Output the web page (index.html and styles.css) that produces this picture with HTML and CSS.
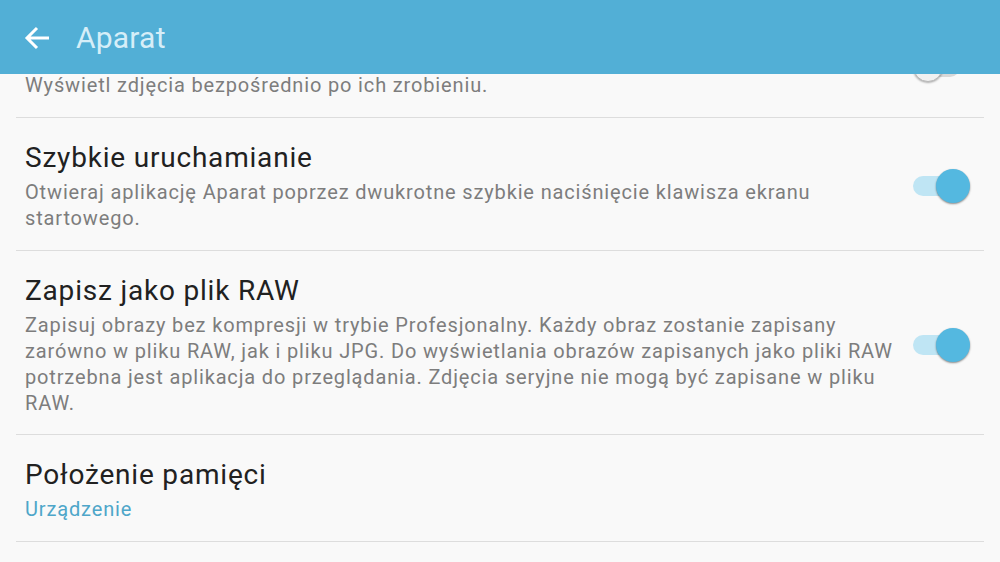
FILE: index.html
```html
<!DOCTYPE html>
<html lang="pl">
<head>
<meta charset="utf-8">
<link rel="stylesheet" href="styles.css">
</head>
<body>
<div class="app">
  <header class="appbar">
    <span class="back" aria-label="Wstecz">
      <svg width="28" height="28" viewBox="0 0 28 28"><path d="M26 14H4M14 4L4 14l10 10" fill="none" stroke="#ffffff" stroke-width="3" stroke-linecap="butt" stroke-linejoin="miter"/></svg>
    </span>
    <h1 class="title">Aparat</h1>
  </header>
  <main class="list">
    <div class="item first">
      <div class="text">
        <div class="item-sub">Wyświetl zdjęcia bezpośrednio po ich zrobieniu.</div>
      </div>
      <div class="switch off"><span class="track"></span><span class="knob"></span></div>
    </div>
    <div class="item">
      <div class="text">
        <div class="item-title">Szybkie uruchamianie</div>
        <div class="item-sub">Otwieraj aplikację Aparat poprzez dwukrotne szybkie naciśnięcie klawisza ekranu startowego.</div>
      </div>
      <div class="switch on"><span class="track"></span><span class="knob"></span></div>
    </div>
    <div class="item tall">
      <div class="text">
        <div class="item-title">Zapisz jako plik RAW</div>
        <div class="item-sub">Zapisuj obrazy bez kompresji w trybie Profesjonalny. Każdy obraz zostanie zapisany zarówno w pliku RAW, jak i pliku JPG. Do wyświetlania obrazów zapisanych jako pliki RAW potrzebna jest aplikacja do przeglądania. Zdjęcia seryjne nie mogą być zapisane w pliku RAW.</div>
      </div>
      <div class="switch on"><span class="track"></span><span class="knob"></span></div>
    </div>
    <div class="item">
      <div class="text">
        <div class="item-title">Położenie pamięci</div>
        <div class="item-sub value">Urządzenie</div>
      </div>
    </div>
  </main>
</div>
</body>
</html>
```
FILE: styles.css
```css
* { box-sizing: border-box; }
html, body { margin: 0; padding: 0; }
body {
  background: #f9f9f9;
  font-family: Roboto, "Noto Sans", sans-serif;
  width: 1000px;
  height: 562px;
  overflow: hidden;
}
.app { display: flex; flex-direction: column; height: 562px; }
.appbar {
  position: relative;
  z-index: 2;
  height: 74px;
  flex: none;
  background: #52afd6;
  display: flex;
  align-items: center;
  padding-left: 23px;
}
.back {
  width: 28px;
  height: 28px;
  display: flex;
  margin-top: 2px;
}
.title {
  margin: 2px 0 0 25px;
  font-weight: 400;
  font-size: 30px;
  line-height: 40px;
  color: #d6eef8;
  letter-spacing: 0.2px;
}
.list {
  flex: 1;
  overflow: hidden;
  background: #f9f9f9;
}
.item {
  display: flex;
  align-items: center;
  margin: 0 16px;
  padding: 23px 14px 19px 9px;
  border-bottom: 1px solid #dddddd;
  gap: 10px;
}
.item.tall { padding-bottom: 18px; }
.item.first {
  margin-top: -2px;
  padding-top: 0;
  align-items: flex-start;
}
.item.first .item-sub { margin-top: 0; }
.item.first .switch { margin-top: -22px; }
.text { flex: 1; min-width: 0; }
.item-title {
  font-size: 28px;
  line-height: 34px;
  letter-spacing: 0.8px;
  color: #212121;
}
.item-sub {
  margin-top: 4px;
  font-size: 20px;
  line-height: 26px;
  letter-spacing: 0.85px;
  color: #7d7d7d;
}
.item-sub.value { color: #4ea6c9; }
.switch {
  position: relative;
  width: 59px;
  height: 34px;
  flex: none;
}
.switch .track {
  position: absolute;
  left: 2px;
  top: 7px;
  width: 47px;
  height: 20px;
  border-radius: 10px;
  background: #bfe5f4;
}
.switch .knob {
  position: absolute;
  top: 0;
  right: 0;
  width: 34px;
  height: 34px;
  border-radius: 50%;
  background: #54b8e0;
  box-shadow: 0 1px 2px rgba(0,0,0,0.45);
}
.switch.off .track { background: #d8d8d8; }
.switch.off .knob {
  right: auto;
  left: 2px;
  top: 2px;
  width: 30px;
  height: 30px;
  background: #f1f1f1;
  border: 1px solid #b8b8b8;
  box-shadow: 0 1px 2px rgba(0,0,0,0.3);
}
```
